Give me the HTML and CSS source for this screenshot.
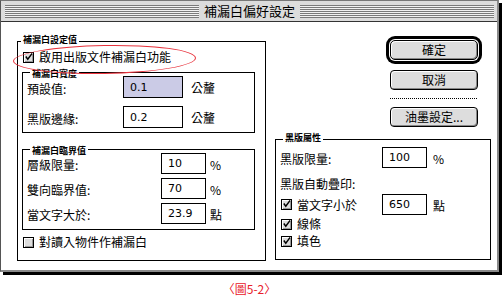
FILE: index.html
```html
<!DOCTYPE html>
<html>

<head>
  <title>補漏白偏好設定</title>
  <link rel="stylesheet" href="styles.css">
</head>

<body>
  <div class="window">
    <div class="titlebar">
      <div class="stripes"></div>
      <div class="title-text">補漏白偏好設定</div>
      <div class="stripes"></div>
    </div>

    <div class="content">
      <!-- left column -->
      <div class="group group-main">
        <div class="group-title">補漏白設定值</div>
        <div class="check-row row-enable">
          <span class="checkbox"><svg width="10" height="10" viewBox="0 0 10 10"><path d="M2 4.5 L4.2 7.5 L9 1" fill="none" stroke="#000" stroke-width="1.6"/></svg></span>
          <span class="label-text">啟用出版文件補漏白功能</span>
        </div>

        <div class="group group-width">
          <div class="group-title">補漏白寬度</div>
          <div class="field-row first">
            <span class="field-label wide">預設值:</span>
            <span class="input input-wide selected">0.1</span>
            <span class="unit unit-far">公釐</span>
          </div>
          <div class="field-row second">
            <span class="field-label wide">黑版邊緣:</span>
            <span class="input input-wide">0.2</span>
            <span class="unit unit-far">公釐</span>
          </div>
        </div>

        <div class="group group-limit">
          <div class="group-title">補漏白臨界值</div>
          <div class="field-row first">
            <span class="field-label long">層級限量:</span>
            <span class="input input-small">10</span>
            <span class="unit">%</span>
          </div>
          <div class="field-row next">
            <span class="field-label long">雙向臨界值:</span>
            <span class="input input-small">70</span>
            <span class="unit">%</span>
          </div>
          <div class="field-row next">
            <span class="field-label long">當文字大於:</span>
            <span class="input input-small">23.9</span>
            <span class="unit">點</span>
          </div>
        </div>

        <div class="check-row row-import">
          <span class="checkbox"></span>
          <span class="label-text">對讀入物件作補漏白</span>
        </div>
      </div>

      <!-- right column -->
      <div class="side">
        <div class="buttons">
          <div class="button default">確定</div>
          <div class="button cancel">取消</div>
          <div class="dots"></div>
          <div class="button ink">油墨設定...</div>
        </div>

        <div class="group group-black">
          <div class="group-title">黑版屬性</div>
          <div class="field-row black-first">
            <span class="field-label black">黑版限量:</span>
            <span class="input input-small">100</span>
            <span class="unit unit-black">%</span>
          </div>
          <div class="plain-row">黑版自動疊印:</div>
          <div class="field-row black-text">
            <span class="check-inline">
              <span class="checkbox"><svg width="10" height="10" viewBox="0 0 10 10"><path d="M2 4.5 L4.2 7.5 L9 1" fill="none" stroke="#000" stroke-width="1.6"/></svg></span>
              <span class="label-text">當文字小於</span>
            </span>
            <span class="input input-small">650</span>
            <span class="unit unit-black">點</span>
          </div>
          <div class="check-row black-check">
            <span class="checkbox"><svg width="10" height="10" viewBox="0 0 10 10"><path d="M2 4.5 L4.2 7.5 L9 1" fill="none" stroke="#000" stroke-width="1.6"/></svg></span>
            <span class="label-text">線條</span>
          </div>
          <div class="check-row black-check">
            <span class="checkbox"><svg width="10" height="10" viewBox="0 0 10 10"><path d="M2 4.5 L4.2 7.5 L9 1" fill="none" stroke="#000" stroke-width="1.6"/></svg></span>
            <span class="label-text">填色</span>
          </div>
        </div>
      </div>
    </div>

    <!-- red marker around the first option -->
    <div class="marker"></div>
  </div>

  <div class="caption">〈圖5-2〉</div>
</body>

</html>
```

FILE: styles.css
```css
body {
  margin: 0;
  background: #ffffff;
  font-family: "Noto Sans CJK TC", "Liberation Sans", sans-serif;
  font-size: 12px;
  color: #000000;
}

.window {
  position: relative;
  box-sizing: border-box;
  width: 499px;
  height: 272px;
  background: #ffffff;
  border-left: 1px solid #555555;
  border-top: 1px solid #777777;
  border-right: 2px solid #8a8a8a;
  border-bottom: 2px solid #8a8a8a;
  box-shadow: 3px 3px 0 #000000;
}

.titlebar {
  display: flex;
  align-items: center;
  height: 20px;
  padding: 0 3px 0 4px;
  background: #dcdcdc;
  border-bottom: 1px solid #333333;
}

.stripes {
  flex: 1;
  height: 13px;
  background: repeating-linear-gradient(to bottom, #7a7a7a 0, #7a7a7a 1px, #f2f2f2 1px, #f2f2f2 2px);
}

.title-text {
  padding: 0 5px;
  font-size: 13px;
  line-height: 18px;
}

.content {
  display: flex;
  align-items: flex-start;
  padding-left: 16px;
}

.group {
  box-sizing: border-box;
  border: 1px solid #000000;
}

.group-title {
  display: table;
  height: 12px;
  margin: -8px 0 -4px 3px;
  padding: 0 2px;
  background: #ffffff;
  font-size: 9px;
  font-weight: bold;
  line-height: 12px;
}

.group-main {
  width: 249px;
  height: 220px;
  margin-top: 19px;
}

.group-width {
  width: 233px;
  margin: 7px 0 0 4px;
  padding: 3px 0 4px 4px;
}

.group-limit {
  width: 233px;
  margin: 16px 0 0 4px;
  padding: 3px 0 5px 4px;
}

.check-row {
  display: flex;
  align-items: center;
  height: 16px;
}

.row-enable {
  margin-top: 7px;
  padding-left: 5px;
}

.row-import {
  margin-top: 4px;
  padding-left: 5px;
}

.checkbox {
  box-sizing: border-box;
  display: inline-flex;
  width: 11px;
  height: 11px;
  border: 1px solid #000000;
  background: #dddddd;
  box-shadow: inset 1px 1px 0 #ffffff, inset -1px -1px 0 #999999;
}

.checkbox svg {
  margin: -1px 0 0 0;
}

.label-text {
  margin-left: 5px;
  font-size: 12px;
  line-height: 16px;
}

.field-row {
  display: flex;
  align-items: center;
  height: 22px;
}

.group-width .second {
  margin-top: 8px;
}

.group-limit .field-row {
  height: 21px;
}

.group-limit .next {
  margin-top: 4px;
}

.field-label {
  flex: none;
  padding-top: 3px;
  line-height: 16px;
}

.field-label.wide {
  width: 96px;
}

.field-label.long {
  width: 134px;
}

.field-label.black {
  width: 102px;
}

.input {
  box-sizing: border-box;
  display: flex;
  align-items: center;
  height: 100%;
  padding-left: 6px;
  border: 1px solid #000000;
  font-family: "DejaVu Sans", "Liberation Sans", sans-serif;
  font-size: 11px;
}

.input-wide {
  width: 60px;
}

.input-small {
  width: 45px;
}

.selected {
  background: #cbcbe6;
}

.unit {
  margin-left: 4px;
  padding-top: 2px;
  line-height: 16px;
}

.unit-far {
  margin-left: 8px;
}

.unit-black {
  margin-left: 6px;
}

.side {
  width: 216px;
  margin-left: 9px;
}

.buttons {
  width: 88px;
  margin-left: 115px;
  padding-top: 18px;
}

.button {
  box-sizing: border-box;
  height: 20px;
  border: 1px solid #000000;
  border-radius: 4px;
  background: #dddddd;
  box-shadow: inset 1px 1px 0 #ffffff, inset -1px -1px 0 #888888;
  text-align: center;
  font-size: 12px;
  line-height: 18px;
}

.default {
  box-shadow: inset 1px 1px 0 #ffffff, inset -1px -1px 0 #888888, 0 0 0 1px #ffffff, 0 0 0 4px #000000;
  border-radius: 5px;
}

.cancel {
  margin-top: 10px;
}

.dots {
  height: 1px;
  margin-top: 8px;
  background: repeating-linear-gradient(to right, #000000 0, #000000 1px, transparent 1px, transparent 2px);
}

.ink {
  margin-top: 8px;
}

.group-black {
  width: 216px;
  height: 121px;
  margin-top: 12px;
  padding-left: 4px;
}

.black-first {
  height: 21px;
  margin-top: 7px;
}

.plain-row {
  height: 16px;
  margin-top: 8px;
  line-height: 16px;
}

.black-text {
  height: 21px;
  margin-top: 2px;
}

.check-inline {
  display: flex;
  align-items: center;
  width: 101px;
  margin-left: 1px;
}

.black-check {
  margin-top: 1px;
  padding-left: 1px;
}

.marker {
  position: absolute;
  left: 12px;
  top: 44px;
  width: 181px;
  height: 27px;
  border: 1px solid #e8323c;
  border-radius: 50%;
  transform: rotate(-1deg);
}

.caption {
  width: 499px;
  margin-top: 10px;
  text-align: center;
  color: #e8202a;
  font-size: 12px;
  line-height: 14px;
}
```
